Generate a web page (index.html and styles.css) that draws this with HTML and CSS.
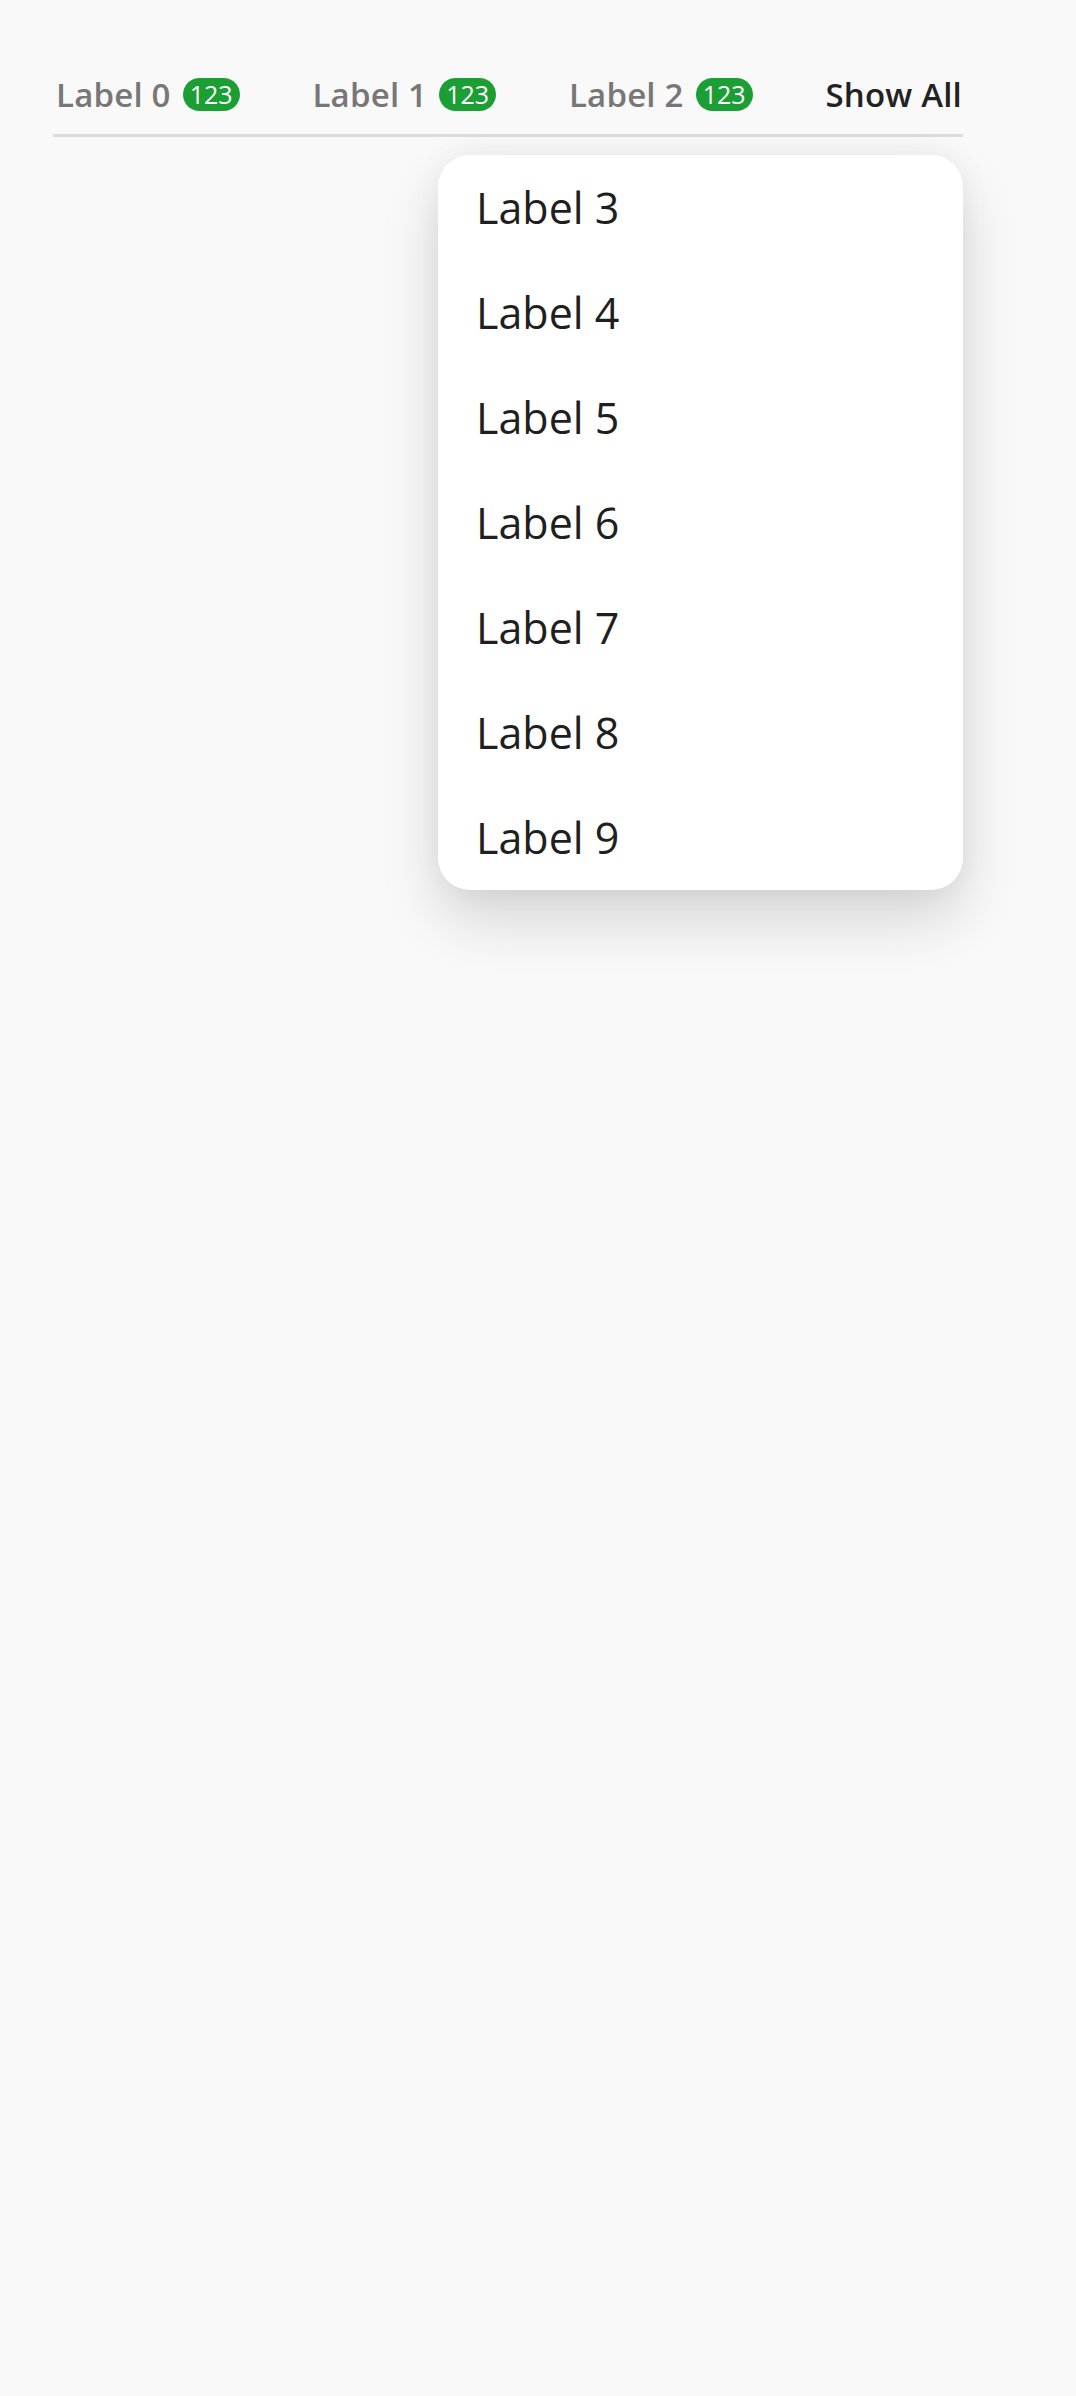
FILE: index.html
```html
<!DOCTYPE html>
<html>
<head>
<meta charset="utf-8">
<link rel="stylesheet" href="styles.css">
</head>
<body>
<div class="page">
  <div class="tabs-wrap">
    <div class="tabs">
      <div class="tab"><span class="tab-label">Label 0</span><span class="badge">123</span></div>
      <div class="tab"><span class="tab-label">Label 1</span><span class="badge">123</span></div>
      <div class="tab"><span class="tab-label">Label 2</span><span class="badge">123</span></div>
      <div class="tab tab-active"><span class="tab-label">Show All</span></div>
    </div>
    <div class="menu">
      <div class="menu-item">Label 3</div>
      <div class="menu-item">Label 4</div>
      <div class="menu-item">Label 5</div>
      <div class="menu-item">Label 6</div>
      <div class="menu-item">Label 7</div>
      <div class="menu-item">Label 8</div>
      <div class="menu-item">Label 9</div>
    </div>
  </div>
</div>
</body>
</html>
```
FILE: styles.css
```css
html, body {
  margin: 0;
  padding: 0;
  background: #f9f9f9;
}
body {
  font-family: "Open Sans", "Noto Sans", sans-serif;
  width: 1076px;
  min-height: 2396px;
}
.page {
  padding-top: 72px;
}
.tabs-wrap {
  position: relative;
  margin-left: 53px;
  width: 910px;
  border-bottom: 3px solid #dcdcdc;
  padding-bottom: 18px;
}
.tabs {
  display: flex;
  justify-content: space-between;
  align-items: center;
  height: 44px;
  padding: 0 1px 0 3px;
}
.tab {
  display: flex;
  align-items: center;
  gap: 12px;
}
.tab-label {
  font-size: 33px;
  font-weight: 600;
  color: #777777;
  white-space: nowrap;
  letter-spacing: 0.2px;
}
.tab-active .tab-label {
  color: #222222;
}
.badge {
  display: flex;
  align-items: center;
  justify-content: center;
  height: 33px;
  min-width: 56px;
  box-sizing: border-box;
  padding: 0 7px;
  border-radius: 17px;
  background: #1b9e33;
  color: #ffffff;
  font-size: 25px;
  font-weight: 400;
  line-height: 1;
}
.menu {
  position: absolute;
  top: calc(100% + 21px);
  right: 0;
  width: 525px;
  background: #ffffff;
  border-radius: 32px;
  box-shadow: 0 0 30px rgba(0, 0, 0, 0.05), 0 30px 60px rgba(0, 0, 0, 0.14);
  overflow: hidden;
}
.menu-item {
  display: flex;
  align-items: center;
  height: 105px;
  padding-left: 38px;
  font-size: 43px;
  font-weight: 400;
  color: #1f1f1f;
  line-height: 1.3;
}
```
